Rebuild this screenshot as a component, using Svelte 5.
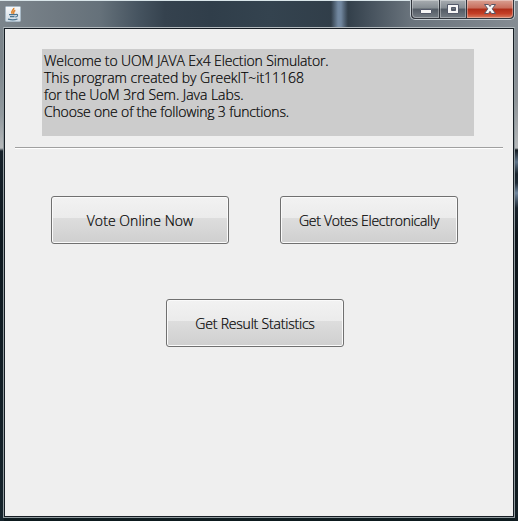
<script>
  const lines = [
    { text: 'Welcome to UOM JAVA Ex4 Election Simulator.', spacing: -0.13 },
    { text: 'This program created by GreekIT~it11168', spacing: -0.04 },
    { text: 'for the UoM 3rd Sem. Java Labs.', spacing: -0.05 },
    { text: 'Choose one of the following 3 functions.', spacing: -0.175 }
  ];
</script>

<div class="window">
  <header class="titlebar">
    <svg class="java" width="16" height="16" viewBox="0 0 16 16" aria-label="Java">
      <defs>
        <linearGradient id="tile" x1="0" y1="0" x2="0" y2="1">
          <stop offset="0" stop-color="#f9fafb" />
          <stop offset="1" stop-color="#cfdae3" />
        </linearGradient>
      </defs>
      <rect x=".5" y=".5" width="15" height="15" rx="1" fill="url(#tile)" stroke="#a9bac7" />
      <path d="M8.8 1.8C9.2 4 5.3 4.800 7.200 7.800M10.300 4.200C8 5.200 8.500 6.200 8.700 8" fill="none" stroke="#df852f" stroke-width="1.500" />
      <path d="M4 8.700H10.500M10.500 8.500C13.500 7.800 13 11 10.300 10.900M5 10.700H9.500M3 13.200C6 14 10 14 12.500 13" fill="none" stroke="#4a738f" stroke-width="1.200" />
    </svg>
    <div class="controls">
      <button class="ctl min" aria-label="Minimize">
        <svg width="28" height="18" viewBox="0 0 28 18"><rect x="9.500" y="9.500" width="11" height="4" rx=".5" fill="#f6f6f6" stroke="#535969" /></svg>
      </button>
      <button class="ctl max" aria-label="Maximize">
        <svg width="26" height="18" viewBox="0 0 26 18"><path d="M7.500 4.500h11v9h-11zM11.500 7.500v3h4v-3z" fill="#f6f6f6" stroke="#535969" fill-rule="evenodd" /></svg>
      </button>
      <button class="ctl close" aria-label="Close">
        <svg width="47" height="18" viewBox="0 0 47 18"><path d="M17.500 4.500h4l1.500 2 1.500-2h4l-3.300 4.300 3.300 4.700h-4l-1.500-2.200-1.500 2.200h-4l3.300-4.700z" fill="#f8f8f8" stroke="#5a5564" stroke-linejoin="round" /></svg>
      </button>
    </div>
  </header>

  <main class="client">
    <div class="intro">
      {#each lines as line}
        <div class="line"><span style="letter-spacing: {line.spacing}px">{line.text}</span></div>
      {/each}
    </div>
    <div class="separator"></div>
    <div class="row">
      <button class="action vote">Vote Online Now</button>
      <button class="action get">Get Votes Electronically</button>
    </div>
    <div class="row second">
      <button class="action stats">Get Result Statistics</button>
    </div>
  </main>
</div>

<style>
  .window {
    box-sizing: border-box;
    width: 518px;
    height: 521px;
    padding: 0 3px 3px;
    overflow: hidden;
    background:
      linear-gradient(#d9e5e9, #d9e5e9) 0 0 / 518px 1px no-repeat,
      linear-gradient(90deg, transparent 331px, #71879f 338px, #71879f 341px, transparent 348px) 0 0 / 518px 27px no-repeat,
      linear-gradient(90deg, #7c858c 0, #6f7981 60px, #65717a 100px, #465460 138px, #35424e 165px, #303e4a 210px, #34434f 270px, #303d48 345px, #46525d 370px, #69737c 410px, #858c93 518px) 0 0 / 518px 28px no-repeat,
      linear-gradient(#858c93 0, #828990 60px, #8e9397 100px, #b5b8ba 148px, #11191f 150px, #5f7489 162px, #18222b 174px, #1c2833 183px, #71879f 193px, #17212a 208px, #0c141a 235px, #101b20 521px) 514px 0 / 4px 521px no-repeat,
      linear-gradient(#7c858c 0, #7b848a 60px, #929a9f 115px, #b5b8ba 148px, #17222b 151px, #0e1920 240px, #16242c 521px) 0 0 / 4px 521px no-repeat,
      #0d1a1e;
  }
  .titlebar {
    display: flex;
    justify-content: space-between;
    height: 27px;
  }
  .java {
    margin: 6px 0 0 2px;
  }
  .controls {
    display: flex;
    box-sizing: border-box;
    width: 105px;
    height: 20px;
    border: 1px solid #c3ccd1;
    border-top: 0;
    border-radius: 0 0 5px 5px;
    background: #30343b;
    padding: 0 1px 1px;
    gap: 1px;
  }
  .ctl {
    height: 18px;
    padding: 0;
    border: 0;
    overflow: hidden;
    box-shadow: inset 0 0 0 1px #ffffff55;
    background: linear-gradient(#a8adb1 0, #858c92 45%, #535b64 50%, #747c84 100%);
  }
  .ctl svg {
    display: block;
  }
  .min { width: 27px; border-radius: 0 0 0 4px; }
  .min svg { margin-left: -1px; }
  .max { width: 26px; }
  .close {
    width: 46px;
    border-radius: 0 0 4px 0;
    background: linear-gradient(#d9a092 0, #c86d5b 45%, #ae2d18 50%, #c43e25 75%, #d97d5f 100%);
  }
  .client {
    box-sizing: border-box;
    width: 512px;
    height: 491px;
    border: 1px solid #8f999d;
    border-top-color: #b2b9bd;
    box-shadow: inset 0 0 0 1px #151c23;
    background: #efefef;
    padding: 21px 11px 0;
    font-family: "Open Sans", "Noto Sans", sans-serif;
    font-size: 14px;
    font-weight: 300;
    color: #000;
    -webkit-text-stroke: 0.2px #000;
  }
  .intro {
    box-sizing: border-box;
    width: 432px;
    height: 87px;
    margin-left: 27px;
    padding: 3px 0 0 2px;
    background: #ccc;
  }
  .line {
    height: 17px;
    line-height: 17px;
    white-space: nowrap;
  }
  .separator {
    width: 488px;
    height: 1px;
    margin-top: 11px;
    background: #a0a0a0;
    border-bottom: 1px solid #fff;
  }
  .row {
    display: flex;
    gap: 51px;
    padding: 47px 0 0 36px;
  }
  .second {
    padding: 55px 0 0 151px;
  }
  .action {
    box-sizing: border-box;
    width: 178px;
    height: 48px;
    padding: 0;
    border: 1px solid #707070;
    border-radius: 3px;
    background: linear-gradient(#f2f2f2 0, #ebebeb 46.500%, #dddddd 46.500%, #cfcfcf 100%);
    box-shadow: inset 0 0 0 1px #fafafa;
    color: #000;
    font: inherit;
    line-height: 17px;
    white-space: nowrap;
  }
  .vote { letter-spacing: 0.06px; }
  .get { letter-spacing: -0.28px; }
  .stats { letter-spacing: -0.2px; }
</style>
